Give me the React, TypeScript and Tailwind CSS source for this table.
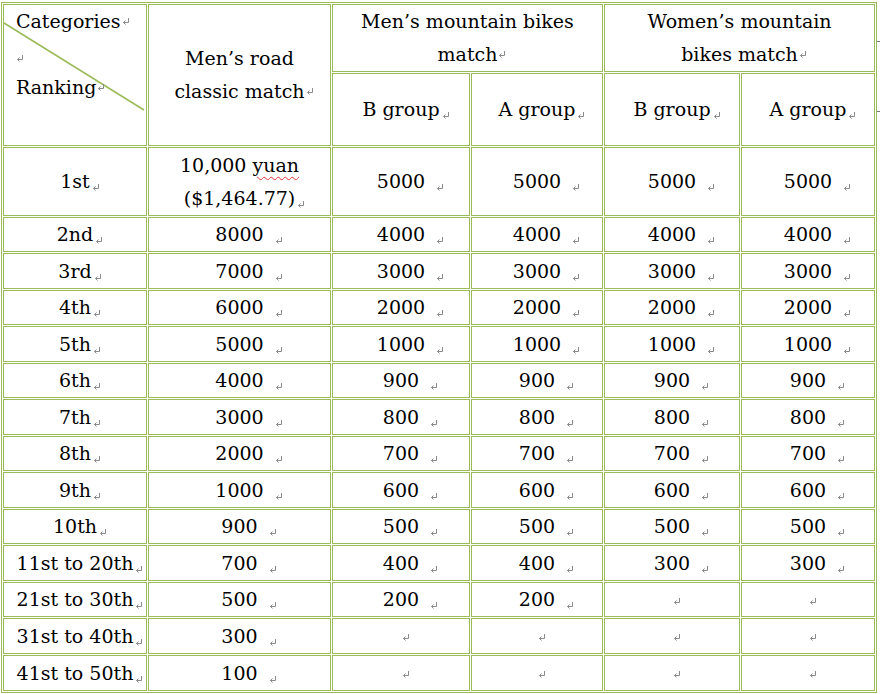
import React from 'react';

const GREEN = 'border-[#9bbb59]';

const Mark: React.FC<{ className?: string }> = ({ className = '' }) => (
  <svg className={`absolute ${className}`} width="8" height="7" viewBox="0 0 8 7" fill="none" stroke="#8a8a8a" strokeWidth="1">
    <path d="M6.5 0V4.5H1.5" />
    <path d="M3.5 2.5L1.5 4.5L3.5 6.5" />
  </svg>
);

type MarkKind = 'tight' | 'spaced';

const Cell: React.FC<{ text?: string; mark?: MarkKind; className?: string }> = ({ text, mark = 'spaced', className = '' }) => (
  <div className={`border ${GREEN} bg-white flex items-center justify-center text-center ${className}`}>
    {text ? (
      <span className="relative">
        {text}
        <Mark className={`left-full bottom-[7px] ${mark === 'tight' ? 'ml-[2px]' : 'ml-[11px]'}`} />
      </span>
    ) : (
      <span className="relative h-[20px]">
        <Mark className="left-[1px] bottom-[5px]" />
      </span>
    )}
  </div>
);

type Row = { rank: string; road: string; mb: string; ma: string; wb: string; wa: string };

const rows: Row[] = [
  { rank: '2nd', road: '8000', mb: '4000', ma: '4000', wb: '4000', wa: '4000' },
  { rank: '3rd', road: '7000', mb: '3000', ma: '3000', wb: '3000', wa: '3000' },
  { rank: '4th', road: '6000', mb: '2000', ma: '2000', wb: '2000', wa: '2000' },
  { rank: '5th', road: '5000', mb: '1000', ma: '1000', wb: '1000', wa: '1000' },
  { rank: '6th', road: '4000', mb: '900', ma: '900', wb: '900', wa: '900' },
  { rank: '7th', road: '3000', mb: '800', ma: '800', wb: '800', wa: '800' },
  { rank: '8th', road: '2000', mb: '700', ma: '700', wb: '700', wa: '700' },
  { rank: '9th', road: '1000', mb: '600', ma: '600', wb: '600', wa: '600' },
  { rank: '10th', road: '900', mb: '500', ma: '500', wb: '500', wa: '500' },
  { rank: '11st to 20th', road: '700', mb: '400', ma: '400', wb: '300', wa: '300' },
  { rank: '21st to 30th', road: '500', mb: '200', ma: '200', wb: '', wa: '' },
  { rank: '31st to 40th', road: '300', mb: '', ma: '', wb: '', wa: '' },
  { rank: '41st to 50th', road: '100', mb: '', ma: '', wb: '', wa: '' },
];

const App: React.FC = () => {
  return (
    <div className="relative w-[880px] h-[694px] bg-white overflow-hidden text-black text-[19px] leading-[33px] [font-family:'DejaVu_Serif',serif]">
      <div className="ml-px mt-[2px] w-max grid grid-cols-[144px_183px_138px_132px_136px_134px] grid-rows-[68px_73px_69px_35px_36px_35px_36px_35px_36px_35px_36px_35px_36px_35px_36px_36px] gap-px p-px border border-[#9bbb59]">
        {/* header */}
        <div className={`relative row-span-2 border ${GREEN} bg-white pl-[12px] text-left`}>
          <svg className="absolute inset-0" width="142" height="140" viewBox="0 0 142 140">
            <line x1="0" y1="18" x2="140" y2="105" stroke="#9bbb59" strokeWidth="1.5" />
          </svg>
          <div className="relative">
            <span className="relative">Categories<Mark className="left-full bottom-[7px] ml-[1px]" /></span>
          </div>
          <div className="relative h-[33px]">
            <Mark className="left-0 bottom-[9px]" />
          </div>
          <div className="relative">
            <span className="relative">Ranking<Mark className="left-full bottom-[7px] ml-[1px]" /></span>
          </div>
        </div>
        <div className={`row-span-2 border ${GREEN} bg-white flex items-center justify-center text-center`}>
          <span>
            Men’s road<br />
            <span className="relative">classic match<Mark className="left-full bottom-[7px] ml-[1px]" /></span>
          </span>
        </div>
        <div className={`col-span-2 border ${GREEN} bg-white flex items-center justify-center text-center`}>
          <span>
            Men’s mountain bikes<br />
            <span className="relative">match<Mark className="left-full bottom-[7px] ml-[1px]" /></span>
          </span>
        </div>
        <div className={`col-span-2 border ${GREEN} bg-white flex items-center justify-center text-center`}>
          <span>
            Women’s mountain<br />
            <span className="relative">bikes match<Mark className="left-full bottom-[7px] ml-[1px]" /></span>
          </span>
        </div>
        <Cell text="B group" mark="tight" />
        <Cell text="A group" mark="tight" />
        <Cell text="B group" mark="tight" />
        <Cell text="A group" mark="tight" />

        {/* 1st */}
        <Cell text="1st" mark="tight" />
        <div className={`border ${GREEN} bg-white flex flex-col items-center justify-center text-center`}>
          <span>
            10,000 <span className="underline decoration-wavy decoration-[#e03030] decoration-1 underline-offset-[4px]">yuan</span>
          </span>
          <span className="relative">
            ($1,464.77)
            <Mark className="left-full bottom-[7px] ml-[2px]" />
          </span>
        </div>
        <Cell text="5000" />
        <Cell text="5000" />
        <Cell text="5000" />
        <Cell text="5000" />

        {rows.map((r) => (
          <React.Fragment key={r.rank}>
            <Cell text={r.rank} mark="tight" />
            <Cell text={r.road} />
            <Cell text={r.mb} />
            <Cell text={r.ma} />
            <Cell text={r.wb} />
            <Cell text={r.wa} />
          </React.Fragment>
        ))}
      </div>

      {/* row end markers */}
      <div className="absolute left-[877px] top-[41px] w-[3px] h-px bg-[#7a7a7a]" />
      <div className="absolute left-[877px] top-[111px] w-[3px] h-px bg-[#7a7a7a]" />
    </div>
  );
};

export default App;
